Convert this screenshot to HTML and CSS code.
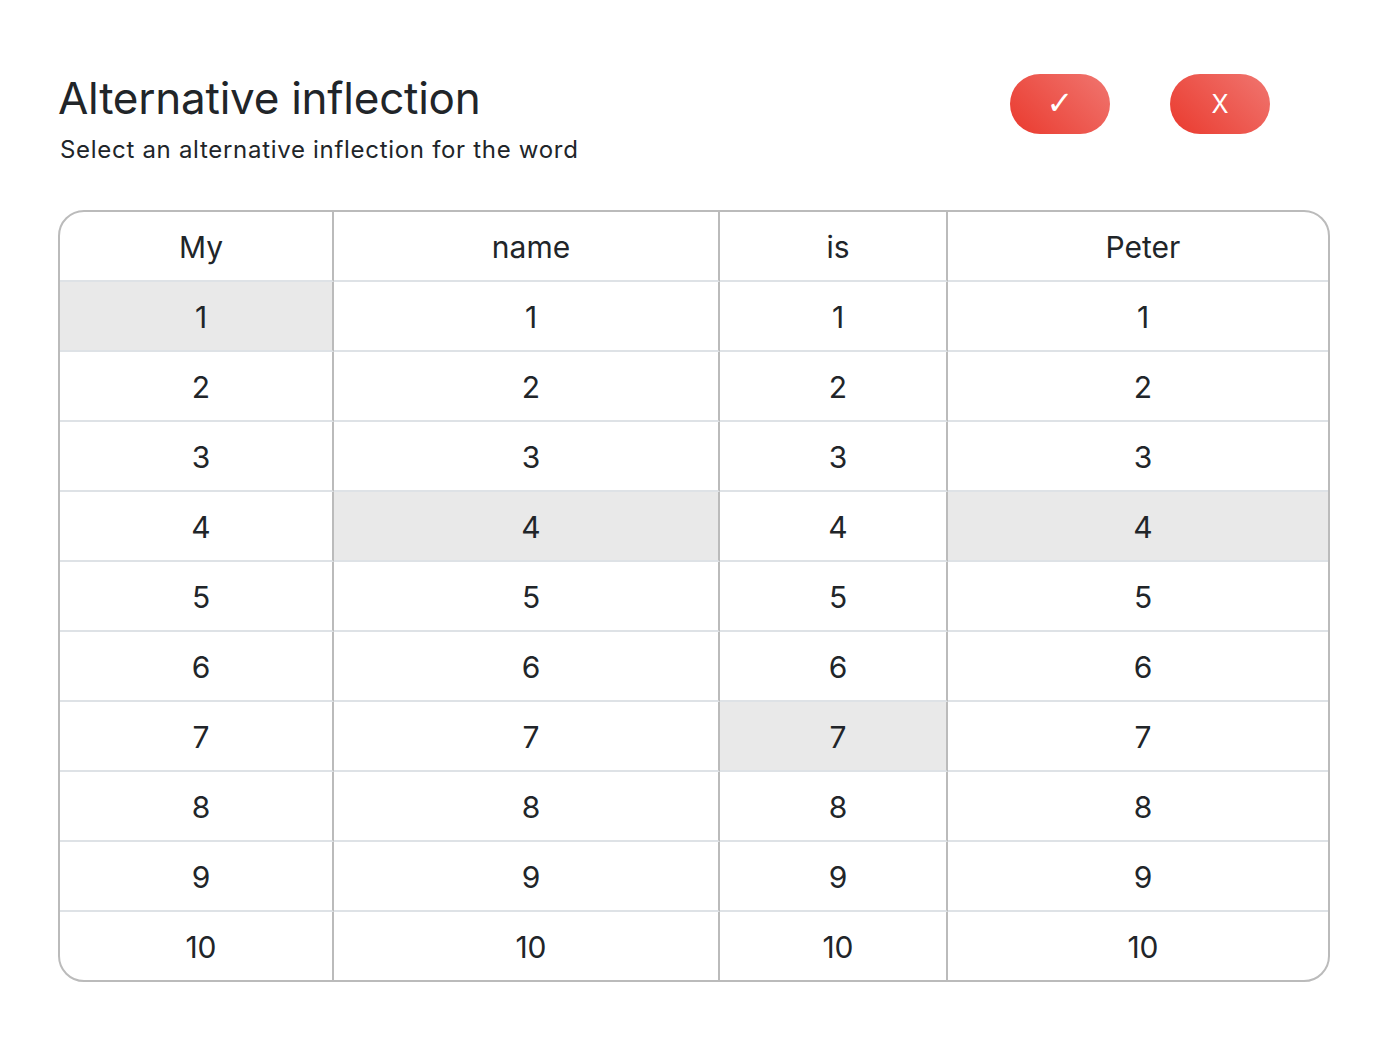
FILE: index.html
```html
<!DOCTYPE html>
<html lang="en">
<head>
<meta charset="utf-8">
<title>Alternative inflection</title>
<link rel="stylesheet" href="styles.css">
</head>
<body>
<div class="page">
  <header class="header">
    <div class="titles">
      <h1 class="title">Alternative inflection</h1>
      <p class="subtitle">Select an alternative inflection for the word</p>
    </div>
    <div class="actions">
      <button class="btn btn-check">&#10003;</button>
      <button class="btn btn-x">X</button>
    </div>
  </header>
  <div class="grid">
    <div class="cell head">My</div><div class="cell head">name</div><div class="cell head">is</div><div class="cell head last">Peter</div>
    <div class="cell sel">1</div><div class="cell">1</div><div class="cell">1</div><div class="cell last">1</div>
    <div class="cell">2</div><div class="cell">2</div><div class="cell">2</div><div class="cell last">2</div>
    <div class="cell">3</div><div class="cell">3</div><div class="cell">3</div><div class="cell last">3</div>
    <div class="cell">4</div><div class="cell sel">4</div><div class="cell">4</div><div class="cell last sel">4</div>
    <div class="cell">5</div><div class="cell">5</div><div class="cell">5</div><div class="cell last">5</div>
    <div class="cell">6</div><div class="cell">6</div><div class="cell">6</div><div class="cell last">6</div>
    <div class="cell">7</div><div class="cell">7</div><div class="cell sel">7</div><div class="cell last">7</div>
    <div class="cell">8</div><div class="cell">8</div><div class="cell">8</div><div class="cell last">8</div>
    <div class="cell">9</div><div class="cell">9</div><div class="cell">9</div><div class="cell last">9</div>
    <div class="cell bottom">10</div><div class="cell bottom">10</div><div class="cell bottom">10</div><div class="cell last bottom">10</div>
  </div>
</div>
</body>
</html>
```
FILE: styles.css
```css
* { box-sizing: border-box; }
html, body { margin: 0; padding: 0; background: #fff; }
body {
  font-family: Inter, "Noto Sans", "Liberation Sans", sans-serif;
  color: #212529;
}
.page {
  width: 1272px;
  margin-left: 58px;
  padding-top: 70px;
}
.header {
  display: flex;
  justify-content: space-between;
  align-items: flex-start;
  padding-left: 0;
  padding-right: 60px;
  height: 140px;
}
.title {
  margin: 0;
  font-size: 44px;
  font-weight: 400;
  line-height: 56px;
  letter-spacing: -0.25px;
}
.subtitle {
  margin: 9px 0 0 2px;
  font-size: 24px;
  font-weight: 400;
  line-height: 30px;
  letter-spacing: 0.7px;
}
.actions {
  display: flex;
  gap: 60px;
  padding-top: 4px;
}
.btn {
  width: 100px;
  height: 60px;
  border: none;
  border-radius: 30px;
  background: linear-gradient(45deg, #ea3a2e 0%, #f07670 100%);
  color: #fff;
  display: flex;
  align-items: center;
  justify-content: center;
  padding: 0;
}
.btn-check {
  font-family: "DejaVu Sans", sans-serif;
  font-size: 32px;
  font-weight: 700;
  padding-bottom: 2px;
}
.btn-x {
  font-family: Inter, "Liberation Sans", sans-serif;
  font-size: 25px;
  font-weight: 400;
}
.grid {
  display: grid;
  grid-template-columns: 274px 386px 228px 380px;
  border: 2px solid #bbbbbb;
  border-radius: 26px;
  overflow: hidden;
}
.cell {
  height: 70px;
  display: flex;
  align-items: center;
  justify-content: center;
  font-size: 30px;
  font-weight: 400;
  border-right: 2px solid #bbbbbb;
  border-bottom: 2px solid #dee2e6;
  padding-top: 2px;
  padding-left: 10px;
}
.cell.last { border-right: none; }
.cell.bottom { border-bottom: none; height: 68px; }
.cell.sel { background: #e9e9e9; }
```
